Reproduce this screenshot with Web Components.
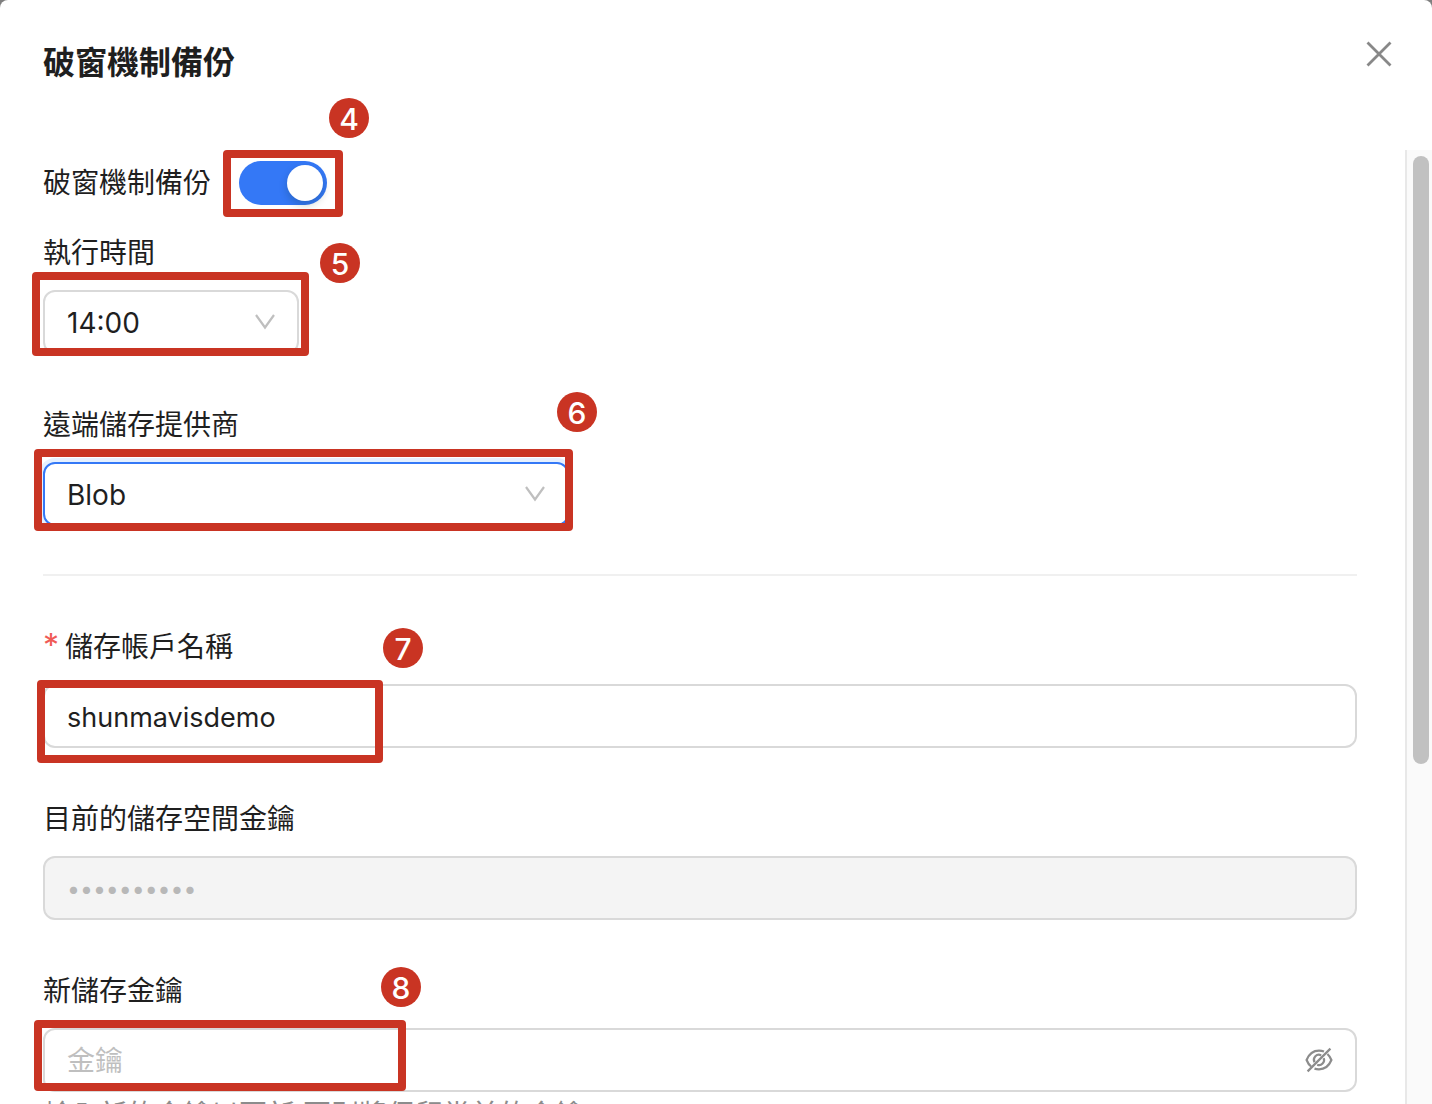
<!DOCTYPE html>
<html lang="zh-Hant">
<head>
<meta charset="utf-8">
<meta name="viewport" content="width=device-width, initial-scale=1">
<title>破窗機制備份</title>
<style>
  body {
    margin: 0;
    background: #7f7f7f;
    color: #1f1f1f;
    font: 28px/46px Inter, "Noto Sans CJK TC", sans-serif;
  }
</style>
</head>
<body>

<backup-dialog>
  <span slot="title">破窗機制備份</span>

  <switch-field label="破窗機制備份">
    <step-mark style="left: -16px; top: -11px; width: 120px; height: 67px; --badge-x: 106px; --badge-y: -52px">4</step-mark>
  </switch-field>

  <select-field label="執行時間" value="14:00" style="--control-width: 256px">
    <step-mark style="left: -11px; top: -18px; width: 277px; height: 84px; --badge-x: 288px; --badge-y: -29px">5</step-mark>
  </select-field>

  <select-field label="遠端儲存提供商" value="Blob" active style="--control-width: 526px">
    <step-mark style="left: -9px; top: -13px; width: 539px; height: 82px; --badge-x: 523px; --badge-y: -57px">6</step-mark>
  </select-field>

  <section-divider></section-divider>

  <text-field label="儲存帳戶名稱" value="shunmavisdemo" required>
    <step-mark style="left: -6px; top: -4px; width: 346px; height: 83px; --badge-x: 346px; --badge-y: -52px">7</step-mark>
  </text-field>

  <text-field label="目前的儲存空間金鑰" type="password" value="0123456789" disabled></text-field>

  <text-field label="新儲存金鑰" type="password" placeholder="金鑰" toggle>
    <step-mark style="left: -9px; top: -8px; width: 372px; height: 71px; --badge-x: 347px; --badge-y: -53px">8</step-mark>
    <span slot="help">輸入新的金鑰以更新,否則將保留當前的金鑰</span>
  </text-field>
</backup-dialog>

<script>
// Dialog shell: header with close button, content column and scroll track
class BackupDialog extends HTMLElement {
  constructor() {
    super();
    this.attachShadow({ mode: "open" });
  }

  connectedCallback() {
    this.shadowRoot.innerHTML = `
      <style>
        :host {
          display: flex;
          flex-direction: column;
          height: 100vh;
          overflow: hidden;
          border-radius: 8px 8px 0 0;
          background: #fff;
        }
        header {
          display: flex;
          flex: none;
          justify-content: space-between;
          align-items: flex-start;
          box-sizing: border-box;
          height: 150px;
          padding: 40px 39px 0 43px;
        }
        h1 {
          margin: 0;
          font-size: 32px;
          line-height: 46px;
          font-weight: 700;
        }
        button {
          display: flex;
          padding: 0;
          border: 0;
          background: none;
          color: #888;
        }
        .body {
          display: flex;
          flex: 1;
          min-height: 0;
        }
        .content {
          display: flex;
          flex-direction: column;
          flex: 1;
          gap: 48px;
          min-width: 0;
          padding: 10px 48px 0 43px;
        }
        .track {
          flex: none;
          box-sizing: border-box;
          width: 27px;
          padding: 6px 6px 12px;
          border-left: 2px solid #e8e8e8;
          background: #fafafa;
        }
        .thumb {
          width: 16px;
          height: 65%;
          border-radius: 8px;
          background: #c1c1c1;
        }
      </style>
      <header>
        <h1><slot name="title"></slot></h1>
        <button type="button" aria-label="關閉">
          <svg width="28" height="28" viewBox="0 0 28 28" fill="none" stroke="currentColor" stroke-width="2.8">
            <path d="M2.5 2.500 25.500 25.500M25.500 2.500 2.500 25.500"/>
          </svg>
        </button>
      </header>
      <div class="body">
        <div class="content"><slot></slot></div>
        <div class="track"><div class="thumb"></div></div>
      </div>
    `;
  }
}

// Shared base: a label, a control and room for a step mark over the control
class FormField extends HTMLElement {
  constructor() {
    super();
    this.attachShadow({ mode: "open" });
  }

  getStyles() {
    return `
      :host { display: block; }
      .field {
        display: flex;
        flex-direction: column;
        gap: 14px;
      }
      .control {
        display: flex;
        position: relative;
        width: var(--control-width, auto);
      }
      label { align-self: flex-start; }
      input, select {
        box-sizing: border-box;
        flex: 1;
        min-width: 0;
        height: 64px;
        margin: 0;
        padding: 2px 22px 0;
        border: 2px solid #d9d9d9;
        border-radius: 12px;
        outline: 0;
        background: #fff;
        color: inherit;
        font: inherit;
        opacity: 1;
      }
    `;
  }

  connectedCallback() {
    this.shadowRoot.innerHTML = `
      <style>${this.getStyles()}</style>
      <div class="field">
        <label for="control">${this.getAttribute("label")}</label>
        <div class="control">
          ${this.getControl()}
          <slot></slot>
        </div>
      </div>
      <slot name="help"></slot>
    `;
  }
}

class SwitchField extends FormField {
  getStyles() {
    return `
      ${super.getStyles()}
      /* sits closer to the next field than the others do */
      :host { margin-bottom: -24px; }
      .field {
        flex-direction: row;
        align-items: center;
        gap: 28px;
      }
      input {
        appearance: none;
        display: flex;
        flex: none;
        justify-content: flex-end;
        width: 88px;
        height: 44px;
        padding: 4px;
        border: 0;
        border-radius: 22px;
        background: #3478f6;
      }
      input::before {
        content: "";
        width: 36px;
        height: 36px;
        border-radius: 50%;
        background: #fff;
        box-shadow: 0 4px 8px rgba(0, 35, 11, 0.2);
      }
      input:not(:checked) {
        justify-content: flex-start;
        background: #bfbfbf;
      }
    `;
  }

  getControl() {
    return `<input id="control" type="checkbox" role="switch" checked>`;
  }
}

class SelectField extends FormField {
  getStyles() {
    return `
      ${super.getStyles()}
      select { appearance: none; }
      :host([active]) select {
        border-color: #3478f6;
        box-shadow: 0 0 0 4px #e6f0fe;
      }
      svg {
        position: absolute;
        right: 24px;
        top: 22px;
        pointer-events: none;
      }
    `;
  }

  getControl() {
    return `
      <select id="control"><option>${this.getAttribute("value")}</option></select>
      <svg width="20" height="20" viewBox="0 0 20 20" fill="none" stroke="#bfbfbf" stroke-width="2.2">
        <path d="M1 3 10 15.500 19 3"/>
      </svg>
    `;
  }
}

class TextField extends FormField {
  getStyles() {
    return `
      ${super.getStyles()}
      :host([required]) label::before {
        content: "*";
        margin-right: 6px;
        color: #f05b56;
        font-size: 32px;
        line-height: 32px;
      }
      input { font-size: 27px; }
      input:disabled {
        background: #f4f4f4;
        color: #b8b8b8;
        font-size: 23px;
      }
      input::placeholder {
        color: #bfbfbf;
        font-size: 28px;
        opacity: 1;
      }
      button {
        display: flex;
        position: absolute;
        right: 24px;
        top: 18px;
        padding: 0;
        border: 0;
        background: none;
        color: #8c8c8c;
      }
      ::slotted([slot="help"]) {
        display: block;
        color: #8c8c8c;
      }
    `;
  }

  getControl() {
    const type = this.getAttribute("type") || "text";
    const value = this.getAttribute("value") || "";
    const placeholder = this.getAttribute("placeholder") || "";
    const disabled = this.hasAttribute("disabled") ? "disabled" : "";
    return `
      <input id="control" type="${type}" value="${value}" placeholder="${placeholder}" ${disabled}>
      ${this.hasAttribute("toggle") ? this.getToggle() : ""}
    `;
  }

  // crossed-out eye
  getToggle() {
    return `
      <button type="button" aria-label="顯示金鑰">
        <svg width="28" height="28" viewBox="0 0 28 28" fill="none" stroke="currentColor" stroke-width="2.2">
          <path d="M19 5.600C17.500 5 15.800 4.700 14 4.700 8.500 4.700 4.200 7.600 1.600 14 2.700 16.800 4.200 19 6.100 20.500"/>
          <path d="M9.500 22.600C10.900 23.100 12.400 23.300 14 23.300 19.500 23.300 23.800 20.400 26.400 14 25.400 11.500 24.100 9.500 22.400 8"/>
          <path d="M16.200 9.400A5 5 0 0 0 9.500 16.200M12.200 18.700A5 5 0 0 0 18.700 12.200"/>
          <path d="M2.600 25.400 25.400 2.600"/>
        </svg>
      </button>
    `;
  }
}

class SectionDivider extends HTMLElement {
  constructor() {
    super();
    this.attachShadow({ mode: "open" });
    this.shadowRoot.innerHTML = `
      <style>
        :host { display: block; }
        hr {
          height: 2px;
          margin: 0;
          border: 0;
          background: #f0f0f0;
        }
      </style>
      <hr>
    `;
  }
}

// Red frame laid over a control, with its numbered badge
class StepMark extends HTMLElement {
  constructor() {
    super();
    this.attachShadow({ mode: "open" });
    this.shadowRoot.innerHTML = `
      <style>
        :host {
          position: absolute;
          z-index: 1;
          box-sizing: border-box;
          border: 8px solid #c93423;
          border-radius: 4px;
          pointer-events: none;
        }
        .badge {
          position: absolute;
          box-sizing: border-box;
          left: calc(var(--badge-x) - 8px);
          top: calc(var(--badge-y) - 8px);
          width: 40px;
          height: 40px;
          border-radius: 50%;
          background: #c93423;
          color: #fff;
          font-size: 30px;
          line-height: 42px;
          font-weight: 500;
          text-align: center;
        }
      </style>
      <span class="badge"><slot></slot></span>
    `;
  }
}

customElements.define("backup-dialog", BackupDialog);
customElements.define("switch-field", SwitchField);
customElements.define("select-field", SelectField);
customElements.define("text-field", TextField);
customElements.define("section-divider", SectionDivider);
customElements.define("step-mark", StepMark);
</script>
</body>
</html>
